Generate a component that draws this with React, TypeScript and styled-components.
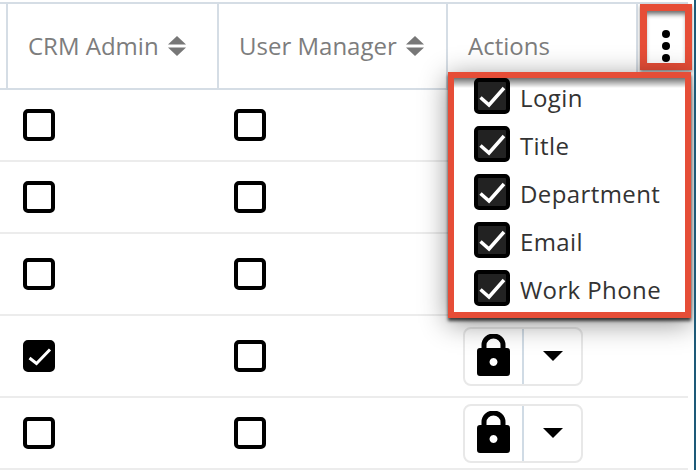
import React from "react";
import styled, { createGlobalStyle } from "styled-components";

const GlobalStyle = createGlobalStyle`
  html, body {
    margin: 0;
    padding: 0;
    background: #fff;
    overflow: hidden;
  }
`;

const COLUMNS = "6px 211px 229px 190px 52px";

const Page = styled.div`
  position: relative;
  box-sizing: border-box;
  width: 696px;
  height: 470px;
  padding-top: 2px;
  border-right: 2px solid #1d5a78;
  overflow: hidden;
  font-family: "Open Sans", "Noto Sans", sans-serif;
`;

const Table = styled.div`
  width: 688px;
`;

const HeadRow = styled.div`
  display: grid;
  grid-template-columns: ${COLUMNS};
  height: 88px;
  box-sizing: border-box;
  border-top: 2px solid #d5dde5;
  border-bottom: 2px solid #d5dde5;
`;

const HeadCell = styled.div`
  display: flex;
  align-items: center;
  gap: 9px;
  padding-left: 20px;
  border-left: 2px solid #d5dde5;
  color: #7d7d7d;
  font-size: 24px;
  white-space: nowrap;
`;

const HeadLabel = styled.span`
  margin-bottom: 2px;
`;

const KebabCell = styled(HeadCell)`
  justify-content: center;
  padding: 0 0 0 6px;
`;

const Row = styled.div<{ $height: number }>`
  display: grid;
  grid-template-columns: ${COLUMNS};
  align-items: center;
  box-sizing: border-box;
  height: ${(p) => p.$height}px;
  border-bottom: 2px solid #ececec;
`;

const Cell = styled.div`
  display: flex;
  align-items: center;
  padding-left: 17px;
`;

const Box = styled.span<{ $checked?: boolean; $size: number; $fill: string }>`
  display: inline-flex;
  flex: none;
  box-sizing: border-box;
  width: ${(p) => p.$size}px;
  height: ${(p) => p.$size}px;
  border: 4px solid #000;
  border-radius: 5px;
  background: ${(p) => (p.$checked ? p.$fill : "#fff")};
  svg {
    display: block;
    margin: -4px;
    flex: none;
  }
`;

const ActionButton = styled.div`
  display: grid;
  grid-template-columns: 59px 57px;
  box-sizing: border-box;
  width: 120px;
  height: 59px;
  border: 2px solid #e8e8e8;
  border-radius: 8px;
  background: #fff;
`;

const LockPart = styled.div`
  display: flex;
  align-items: center;
  justify-content: center;
  padding-bottom: 2px;
  border-right: 2px solid #d0dbe5;
`;

const CaretPart = styled.div`
  display: flex;
  align-items: center;
  justify-content: center;
`;

const Caret = styled.span`
  width: 0;
  height: 0;
  border-left: 10px solid transparent;
  border-right: 10px solid transparent;
  border-top: 10px solid #000;
`;

const Callout = styled.div`
  position: absolute;
  left: 640px;
  top: 4px;
  box-sizing: border-box;
  width: 52px;
  height: 66px;
  border: 7px solid #e64d37;
  box-shadow: 0 2px 3px rgba(0, 0, 0, 0.45), inset 0 5px 5px -2px rgba(0, 0, 0, 0.6);
`;

const Menu = styled.div`
  position: absolute;
  left: 448px;
  top: 72px;
  box-sizing: border-box;
  display: flex;
  flex-direction: column;
  gap: 12px;
  width: 243px;
  height: 246px;
  padding-left: 20px;
  border: 6px solid #e64d37;
  background: #fff;
  box-shadow: 0 3px 3px rgba(0, 0, 0, 0.7), 0 5px 26px rgba(0, 0, 0, 0.45);

  &::after {
    content: "";
    position: absolute;
    left: 0;
    right: 0;
    top: 0;
    height: 10px;
    background: linear-gradient(rgba(0, 0, 0, 0.55), rgba(0, 0, 0, 0));
    pointer-events: none;
  }
`;

const MenuItem = styled.label`
  position: relative;
  z-index: 1;
  display: flex;
  align-items: center;
  gap: 10px;
  height: 36px;
  color: #333;
  font-size: 24px;
  letter-spacing: 0.4px;
  white-space: nowrap;
`;

const MenuLabel = styled.span`
  margin-top: 2px;
`;

const SortIcon = () => (
  <svg width="18" height="20" viewBox="0 0 18 20" fill="#777">
    <path d="M9 0 L18 8.5 H0 Z" />
    <path d="M0 11.5 H18 L9 20 Z" />
  </svg>
);

const Kebab = () => (
  <svg width="10" height="34" viewBox="0 0 10 34" fill="#000">
    <circle cx="5" cy="5" r="4" />
    <circle cx="5" cy="17" r="4" />
    <circle cx="5" cy="29" r="4" />
  </svg>
);

const Lock = () => (
  <svg width="33" height="42" viewBox="0 0 33 42">
    <path d="M7 16 V11 a9.5 9 0 0 1 19 0 V16" fill="none" stroke="#000" strokeWidth="5" />
    <path
      fillRule="evenodd"
      d="M3 14 H30 a3 3 0 0 1 3 3 V39 a3 3 0 0 1 -3 3 H3 a3 3 0 0 1 -3 -3 V17 a3 3 0 0 1 3 -3 Z M16.5 24 a4 4 0 1 0 0.01 0 Z"
    />
  </svg>
);

const TableCheck = ({ checked }: { checked?: boolean }) => (
  <Box $size={32} $fill="#000" $checked={checked}>
    {checked && (
      <svg width="32" height="32" viewBox="0 0 32 32" fill="none">
        <path d="M6.5 18 L13.5 23.5 L27 9.5" stroke="#fff" strokeWidth="3" />
      </svg>
    )}
  </Box>
);

const MenuCheck = () => (
  <Box $size={36} $fill="#222" $checked>
    <svg width="36" height="36" viewBox="0 0 36 36" fill="none">
      <path d="M6.5 19.5 L15 27 L30 10" stroke="#fff" strokeWidth="3.5" />
    </svg>
  </Box>
);

const rows = [
  { height: 72, crm: false },
  { height: 72, crm: false },
  { height: 82, crm: false },
  { height: 82, crm: true },
  { height: 72, crm: false },
];

const fields = ["Login", "Title", "Department", "Email", "Work Phone"];

export default function App() {
  return (
    <Page>
      <GlobalStyle />
      <Table>
        <HeadRow>
          <div />
          <HeadCell>
            <HeadLabel>CRM Admin</HeadLabel>
            <SortIcon />
          </HeadCell>
          <HeadCell>
            <HeadLabel>User Manager</HeadLabel>
            <SortIcon />
          </HeadCell>
          <HeadCell>
            <HeadLabel>Actions</HeadLabel>
          </HeadCell>
          <KebabCell>
            <Kebab />
          </KebabCell>
        </HeadRow>
        {rows.map((row, i) => (
          <Row key={i} $height={row.height}>
            <div />
            <Cell>
              <TableCheck checked={row.crm} />
            </Cell>
            <Cell>
              <TableCheck />
            </Cell>
            <Cell>
              <ActionButton>
                <LockPart>
                  <Lock />
                </LockPart>
                <CaretPart>
                  <Caret />
                </CaretPart>
              </ActionButton>
            </Cell>
            <div />
          </Row>
        ))}
      </Table>
      <Callout />
      <Menu>
        {fields.map((field) => (
          <MenuItem key={field}>
            <MenuCheck />
            <MenuLabel>{field}</MenuLabel>
          </MenuItem>
        ))}
      </Menu>
    </Page>
  );
}
